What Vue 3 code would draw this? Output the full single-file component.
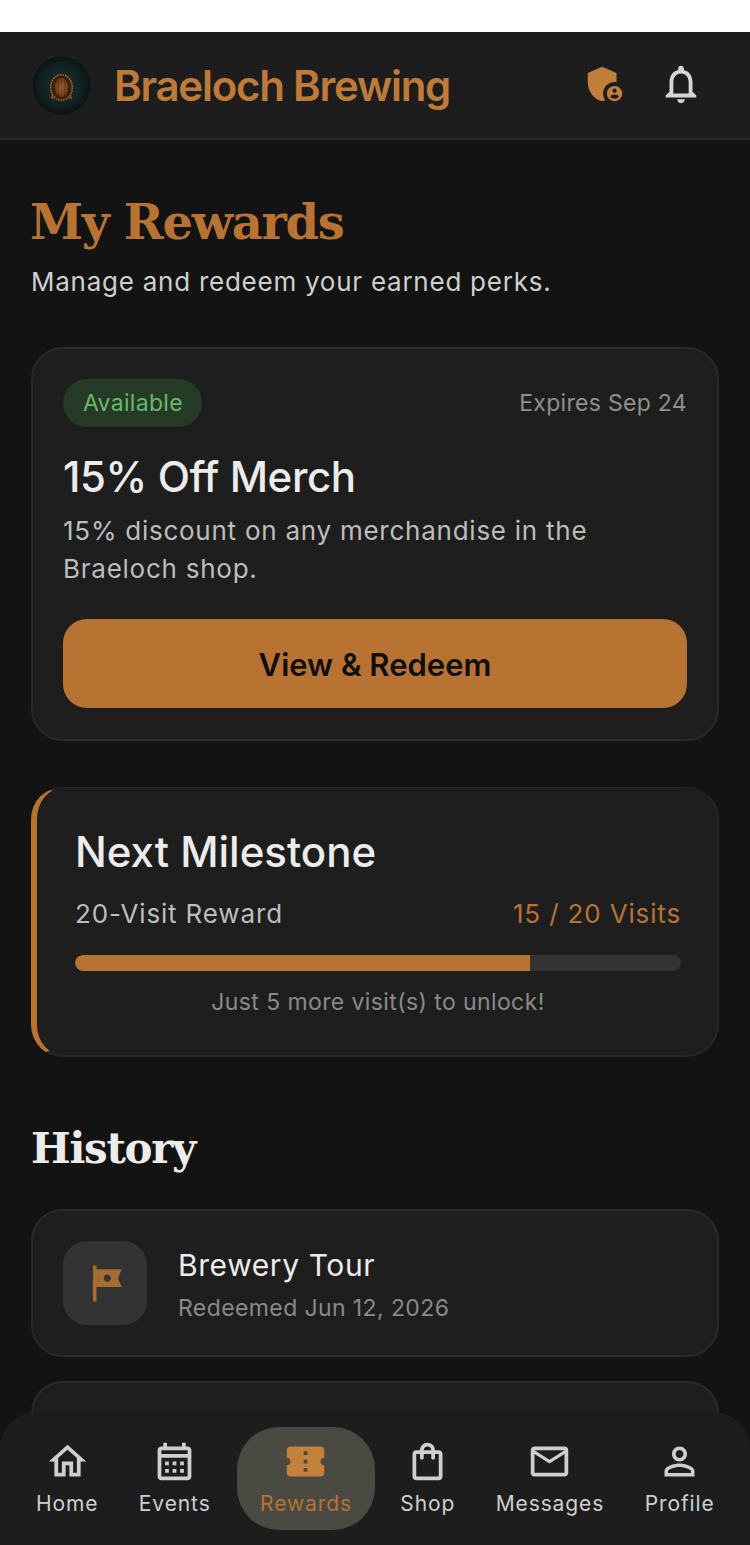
<script setup>
const navItems = [
  { label: 'Home', path: 'M12 5.69l5 4.5V18h-2v-6H9v6H7v-7.81l5-4.5M12 3L2 12h3v8h6v-6h2v6h6v-8h3L12 3z' },
  { label: 'Events', path: 'M19 4h-1V2h-2v2H8V2H6v2H5c-1.1 0-2 .9-2 2v14c0 1.1.9 2 2 2h14c1.1 0 2-.9 2-2V6c0-1.1-.9-2-2-2zm0 16H5V10h14v10zm0-12H5V6h14v2zM9 14H7v-2h2v2zm4 0h-2v-2h2v2zm4 0h-2v-2h2v2zm-8 4H7v-2h2v2zm4 0h-2v-2h2v2zm4 0h-2v-2h2v2z' },
  { label: 'Rewards', active: true, path: 'M22 10V6c0-1.11-.9-2-2-2H4c-1.1 0-1.99.89-1.99 2v4c1.1 0 1.99.9 1.99 2s-.89 2-2 2v4c0 1.1.9 2 2 2h16c1.1 0 2-.9 2-2v-4c-1.1 0-2-.9-2-2s.9-2 2-2zm-9 7.5h-2v-2h2v2zm0-4.5h-2v-2h2v2zm0-4.5h-2v-2h2v2z' },
  { label: 'Shop', path: 'M18 6h-2c0-2.21-1.79-4-4-4S8 3.79 8 6H6c-1.1 0-2 .9-2 2v12c0 1.1.9 2 2 2h12c1.1 0 2-.9 2-2V8c0-1.1-.9-2-2-2zm-6-2c1.1 0 2 .9 2 2h-4c0-1.1.9-2 2-2zm6 16H6V8h2v2c0 .55.45 1 1 1s1-.45 1-1V8h4v2c0 .55.45 1 1 1s1-.45 1-1V8h2v12z' },
  { label: 'Messages', path: 'M20 4H4c-1.1 0-1.99.9-1.99 2L2 18c0 1.1.9 2 2 2h16c1.1 0 2-.9 2-2V6c0-1.1-.9-2-2-2zm0 14H4V8l8 5 8-5v10zm-8-7L4 6h16l-8 5z' },
  { label: 'Profile', path: 'M12 5.9c1.16 0 2.1.94 2.1 2.1s-.94 2.1-2.1 2.1S9.9 9.16 9.9 8s.94-2.1 2.1-2.1m0 9c2.97 0 6.1 1.46 6.1 2.1v1.1H5.9V17c0-.64 3.13-2.1 6.1-2.1M12 4C9.79 4 8 5.79 8 8s1.79 4 4 4 4-1.79 4-4-1.79-4-4-4zm0 9c-2.67 0-8 1.34-8 4v3h16v-3c0-2.66-5.33-4-8-4z' }
]
const progress = 75
</script>

<template>
  <div class="screen">
    <header class="topbar">
      <div class="brand">
        <svg class="logo" viewBox="0 0 60 60" aria-hidden="true">
          <defs>
            <radialGradient id="logoBg" cx="50%" cy="50%" r="50%">
              <stop offset="0%" stop-color="#1c3234" />
              <stop offset="75%" stop-color="#0f2022" />
              <stop offset="100%" stop-color="#0a1313" />
            </radialGradient>
            <radialGradient id="wood" cx="50%" cy="50%" r="55%">
              <stop offset="0%" stop-color="#a8642c" />
              <stop offset="100%" stop-color="#5a3014" />
            </radialGradient>
          </defs>
          <circle cx="30" cy="30" r="29.5" fill="url(#logoBg)" />
          <path d="M14 3 A29.5 29.5 0 0 1 46 3" fill="none" stroke="#4a3a22" stroke-width="0.8" opacity=".6" />
          <rect x="19" y="40" width="3" height="4" fill="#6c4520" />
          <rect x="38" y="40" width="3" height="4" fill="#6c4520" />
          <ellipse cx="30" cy="32" rx="11" ry="13" fill="#3a2210" stroke="#a86c2c" stroke-width="1.6" stroke-dasharray="1.6 1" />
          <ellipse cx="30" cy="32" rx="7.5" ry="10.5" fill="url(#wood)" stroke="#2a1608" stroke-width="0.8" />
          <path d="M27 22v20M30 21.5v21M33 22v20" stroke="#3a1e0c" stroke-width=".5" opacity=".7" />
        </svg>
        <span class="brand-name">Braeloch Brewing</span>
      </div>
      <div class="top-actions">
        <svg class="top-icon copper-fill" viewBox="0 0 24 24" aria-hidden="true">
          <path d="M17 11c.34 0 .67.04 1 .09V6.27L10.5 3 3 6.27v4.91c0 4.54 3.2 8.79 7.5 9.82.55-.13 1.08-.32 1.6-.55-.69-.98-1.1-2.17-1.1-3.45 0-3.31 2.69-6 6-6z" />
          <path d="M17 13c-2.21 0-4 1.79-4 4s1.79 4 4 4 4-1.79 4-4-1.79-4-4-4zm0 1.38c.62 0 1.12.51 1.12 1.12s-.51 1.12-1.12 1.12-1.12-.51-1.12-1.12.5-1.12 1.12-1.12zm0 5.37c-.93 0-1.74-.46-2.24-1.17.05-.72 1.51-1.08 2.24-1.08s2.19.36 2.24 1.08c-.5.71-1.31 1.17-2.24 1.17z" />
        </svg>
        <svg class="top-icon bell" viewBox="0 0 24 24" aria-hidden="true">
          <path d="M12 22c1.1 0 2-.9 2-2h-4c0 1.1.9 2 2 2zm6-6v-5c0-3.07-1.63-5.64-4.5-6.32V4c0-.83-.67-1.5-1.5-1.5s-1.5.67-1.5 1.5v.68C7.64 5.36 6 7.92 6 11v5l-2 2v1h16v-1l-2-2zm-2 1H8v-6c0-2.48 1.51-4.5 4-4.5s4 2.02 4 4.5v6z" />
        </svg>
      </div>
    </header>

    <main class="content">
      <h1 class="page-title">My Rewards</h1>
      <p class="page-sub">Manage and redeem your earned perks.</p>

      <section class="card reward">
        <div class="reward-top">
          <span class="badge">Available</span>
          <span class="expires">Expires Sep 24</span>
        </div>
        <h2 class="card-title reward-title">15% Off Merch</h2>
        <p class="reward-desc">15% discount on any merchandise in the Braeloch shop.</p>
        <button class="redeem" type="button">View &amp; Redeem</button>
      </section>

      <section class="card milestone">
        <h2 class="card-title">Next Milestone</h2>
        <div class="milestone-row">
          <span class="milestone-name">20-Visit Reward</span>
          <span class="milestone-count">15 / 20 Visits</span>
        </div>
        <div class="track"><div class="fill" :style="{ width: progress + '%' }"></div></div>
        <p class="milestone-note">Just 5 more visit(s) to unlock!</p>
      </section>

      <h2 class="history-title">History</h2>
      <div class="history">
        <article class="card history-item">
          <div class="history-icon">
            <svg viewBox="0 0 24 24" aria-hidden="true">
              <path d="M21 4H7V2H5v20h2v-8h14l-2-5 2-5zm-6 5c0 1.1-.9 2-2 2s-2-.9-2-2 .9-2 2-2 2 .9 2 2z" />
            </svg>
          </div>
          <div class="history-text">
            <div class="history-name">Brewery Tour</div>
            <div class="history-date">Redeemed Jun 12, 2026</div>
          </div>
        </article>
        <article class="card history-item"></article>
      </div>
    </main>

    <nav class="bottom-nav">
      <div v-for="item in navItems" :key="item.label" class="nav-item" :class="{ active: item.active }">
        <svg class="nav-icon" viewBox="0 0 24 24" aria-hidden="true"><path :d="item.path" /></svg>
        <span class="nav-label">{{ item.label }}</span>
      </div>
    </nav>
  </div>
</template>

<style scoped>
.screen {
  position: relative;
  width: 750px;
  height: 1545px;
  overflow: hidden;
  padding-top: 32px;
  box-sizing: border-box;
  background: #fff;
  font-family: Inter, "Noto Sans", sans-serif;
  color: #eaeaea;
}
.topbar {
  height: 106px;
  box-sizing: content-box;
  display: flex;
  align-items: center;
  justify-content: space-between;
  padding: 0 46px 0 32px;
  background: #1e1d1e;
  border-bottom: 2px solid #2a2a2a;
}
.brand { display: flex; align-items: center; gap: 23px; }
.logo { width: 59px; height: 59px; display: block; }
.brand-name {
  font-size: 42px;
  font-weight: 600;
  letter-spacing: -1.25px;
  color: #bd7a38;
}
.top-actions { display: flex; align-items: center; gap: 30px; margin-bottom: 2px; }
.top-icon { width: 46px; height: 46px; display: block; }
.copper-fill { fill: #c27f3b; }
.bell { fill: #d6d6d6; }
.content {
  background: #141314;
  padding: 46px 31px 0;
  height: 1405px;
  box-sizing: border-box;
}
.page-title {
  margin: 0 0 0 -1px;
  font-family: "DejaVu Serif", serif;
  font-weight: 700;
  font-size: 48px;
  line-height: 72px;
  letter-spacing: -1.3px;
  color: #b87333;
}
.page-sub {
  margin: 6px 0 0;
  font-size: 26px;
  line-height: 36px;
  letter-spacing: 0.75px;
  color: #cfcfcf;
}
.card {
  background: #1f1e1f;
  border: 2px solid #2a2a2a;
  border-radius: 32px;
  box-sizing: border-box;
}
.reward {
  margin-top: 47px;
  height: 394px;
  padding: 30px;
}
.reward-top { display: flex; align-items: center; justify-content: space-between; }
.badge {
  height: 48px;
  padding: 0 19px 0 20px;
  display: flex;
  align-items: center;
  border-radius: 24px;
  background: #263a28;
  color: #66bb6a;
  font-size: 23px;
  letter-spacing: 0.3px;
}
.expires { font-size: 23px; letter-spacing: 0.3px; color: #8f8f8f; }
.card-title {
  margin: 24px 0 0;
  font-size: 42px;
  line-height: 52px;
  font-weight: 500;
  color: #ececec;
}
.reward-title { letter-spacing: -0.4px; }
.reward-desc {
  margin: 9px 0 0;
  font-size: 26px;
  line-height: 38px;
  letter-spacing: 0.75px;
  color: #bdbdbd;
}
.redeem {
  display: block;
  width: 100%;
  height: 89px;
  margin-top: 31px;
  padding: 2px 0 0;
  border: 0;
  border-radius: 24px;
  background: #b87333;
  color: #0f0f0f;
  font-family: inherit;
  font-size: 31px;
  font-weight: 600;
}
.milestone {
  margin-top: 46px;
  height: 270px;
  padding: 38px 36px 0 38px;
  border-color: #272627;
  border-left: 6px solid #b87333;
  border-top-width: 1px;
}
.milestone .card-title { margin: 0; }
.milestone-row {
  margin-top: 17px;
  display: flex;
  justify-content: space-between;
  font-size: 26px;
  line-height: 38px;
  letter-spacing: 0.85px;
}
.milestone-name { color: #bdbdbd; }
.milestone-count { color: #b87333; }
.track {
  margin-top: 22px;
  height: 16px;
  border-radius: 8px;
  background: #333;
  overflow: hidden;
}
.fill { height: 100%; background: #b87333; border-radius: 8px 0 0 8px; }
.milestone-note {
  margin: 15px 0 0;
  text-align: center;
  font-size: 23px;
  line-height: 32px;
  letter-spacing: 0.4px;
  color: #8a8a8a;
}
.history-title {
  margin: 62px 0 0;
  font-family: "DejaVu Serif", serif;
  font-size: 42px;
  font-weight: 700;
  line-height: 60px;
  letter-spacing: -1.3px;
  color: #ececec;
}
.history { margin-top: 30px; display: flex; flex-direction: column; gap: 24px; }
.history-item {
  height: 148px;
  flex: none;
  display: flex;
  align-items: center;
  gap: 31px;
  padding: 0 30px;
}
.history-icon {
  width: 84px;
  height: 84px;
  border-radius: 24px;
  background: #333;
  display: flex;
  align-items: center;
  justify-content: center;
}
.history-icon svg { width: 43px; height: 43px; fill: #a86c33; }
.history-text { padding-top: 2px; }
.history-name { font-size: 30px; line-height: 40px; letter-spacing: 0.6px; color: #ececec; }
.history-date { margin-top: 7px; font-size: 23px; line-height: 32px; letter-spacing: 0.4px; color: #8a8a8a; }
.bottom-nav {
  position: absolute;
  left: 0;
  right: 0;
  bottom: 0;
  height: 133px;
  padding: 15px 16px 15px;
  box-sizing: border-box;
  display: flex;
  align-items: stretch;
  gap: 0.4px;
  background: #1e1d1e;
  border-radius: 36px 36px 0 0;
}
.nav-item {
  padding: 0 20px 11px;
  display: flex;
  flex-direction: column;
  align-items: center;
  justify-content: flex-end;
  color: #cfcfcf;
}
.nav-item.active {
  padding: 0 23px 11px;
  margin: 0 5px 0 6px;
  background: #4a4a42;
  border-radius: 42px;
  color: #b87333;
}
.nav-icon { width: 45px; height: 45px; fill: #cfcfcf; display: block; }
.active .nav-icon { fill: #c4813c; }
.nav-label { margin-top: 5px; font-size: 21px; line-height: 30px; letter-spacing: 0.9px; white-space: nowrap; }
</style>

<style>
html, body { background: #fff; }
</style>
